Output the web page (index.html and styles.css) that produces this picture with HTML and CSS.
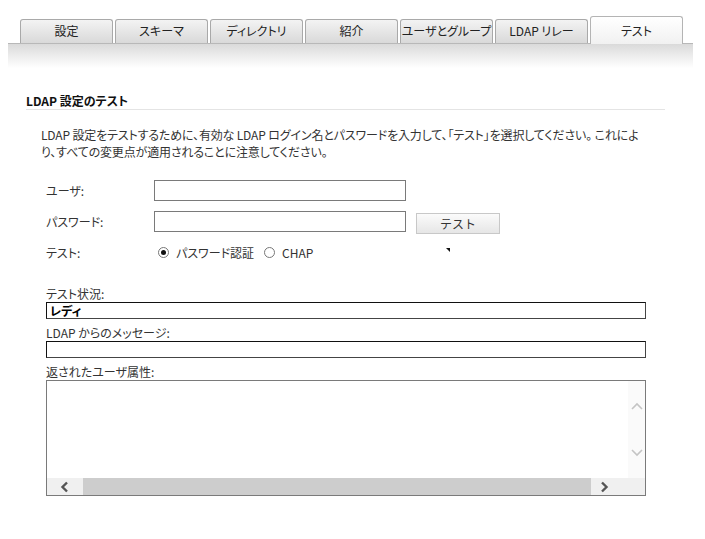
FILE: index.html
```html
<!DOCTYPE html>
<html lang="ja">
<head>
    <meta charset="UTF-8">
    <title>LDAP 設定のテスト</title>
    <link rel="stylesheet" href="styles.css">
</head>
<body>
    <div class="tabs">
        <div class="tab">設定</div>
        <div class="tab">スキーマ</div>
        <div class="tab">ディレクトリ</div>
        <div class="tab">紹介</div>
        <div class="tab">ユーザとグループ</div>
        <div class="tab">LDAP リレー</div>
        <div class="tab active">テスト</div>
    </div>
    <div class="band"></div>

    <div class="content">
        <h2 class="section-title">LDAP 設定のテスト</h2>

        <p class="intro">LDAP 設定をテストするために、有効な LDAP ログイン名とパスワードを入力して、「テスト」を選択してください。 これによ<br>り、すべての変更点が適用されることに注意してください。</p>

        <div class="form">
            <label class="form-label" for="user">ユーザ:</label>
            <div class="form-field"><input type="text" id="user"></div>

            <label class="form-label" for="password">パスワード:</label>
            <div class="form-field">
                <input type="password" id="password">
                <button class="test-btn">テスト</button>
            </div>

            <span class="form-label">テスト:</span>
            <div class="form-field radios">
                <span class="radio checked"></span><span class="radio-text">パスワード認証</span>
                <span class="radio"></span><span class="radio-text">CHAP</span>
                <span class="cursor-mark"></span>
            </div>
        </div>

        <div class="results">
            <div class="result-label">テスト状況:</div>
            <div class="result-box status">レディ</div>

            <div class="result-label">LDAP からのメッセージ:</div>
            <div class="result-box"></div>

            <div class="result-label">返されたユーザ属性:</div>
            <div class="attr-box">
                <div class="attr-main">
                    <div class="attr-text"></div>
                    <div class="vscroll">
                        <svg width="14" height="10" viewBox="0 0 14 10"><path d="M2 8 L7 3 L12 8" fill="none" stroke="#c4c4c4" stroke-width="1.6"/></svg>
                        <svg width="14" height="10" viewBox="0 0 14 10"><path d="M2 2 L7 7 L12 2" fill="none" stroke="#c4c4c4" stroke-width="1.6"/></svg>
                    </div>
                </div>
                <div class="hscroll">
                    <div class="harrow left">
                        <svg width="10" height="12" viewBox="0 0 10 12"><path d="M7 1.5 L2.5 6 L7 10.5" fill="none" stroke="#555" stroke-width="2.4"/></svg>
                    </div>
                    <div class="hthumb"></div>
                    <div class="harrow right">
                        <svg width="10" height="12" viewBox="0 0 10 12"><path d="M3 1.5 L7.5 6 L3 10.5" fill="none" stroke="#555" stroke-width="2.4"/></svg>
                    </div>
                </div>
            </div>
        </div>
    </div>
</body>
</html>
```

FILE: styles.css
```css
body {
    margin: 0;
    background-color: #fff;
    font-family: "Noto Sans CJK JP", sans-serif;
    font-size: 12px;
    font-feature-settings: "palt";
    color: #333;
}

.tabs {
    display: flex;
    align-items: flex-end;
    gap: 2px;
    padding: 15px 0 0 20px;
    box-sizing: border-box;
    height: 43px;
}

.tab {
    width: 93px;
    height: 24px;
    box-sizing: border-box;
    border: 1px solid #a9a9a9;
    border-bottom: none;
    border-radius: 3px 3px 0 0;
    background: linear-gradient(#f3f3f3, #d9d9d9);
    text-align: center;
    line-height: 21px;
    white-space: nowrap;
    color: #222;
}

.tab.active {
    height: 28px;
    line-height: 27px;
    background: linear-gradient(#ffffff, #f1f1f1);
    border-color: #b4b4b4;
    margin-bottom: -1px;
    position: relative;
}

.band {
    margin: 0 12px 0 8px;
    height: 24px;
    border-top: 1px solid #b8b8b8;
    background: linear-gradient(#dadada, #ffffff);
}

.content {
    padding-left: 26px;
    width: 639px;
}

.section-title {
    margin: 27px 0 0 0;
    padding-bottom: 2px;
    font-size: 12px;
    font-weight: bold;
    color: #111;
    line-height: 12px;
    border-bottom: 1px solid #e4e4e4;
}

.intro {
    margin: 16px 0 0 15px;
    line-height: 17px;
    width: 620px;
    white-space: nowrap;
    letter-spacing: -0.15px;
    color: #333;
}

.form {
    display: grid;
    grid-template-columns: 108px 1fr;
    grid-auto-rows: 31px;
    margin: 15px 0 0 20px;
    align-items: center;
}

.form-label {
    color: #333;
}

.form-field {
    display: flex;
    align-items: center;
}

.form-field input {
    width: 252px;
    height: 21px;
    box-sizing: border-box;
    border: 1px solid #7a7a7a;
    margin: 0;
    padding: 0 3px;
}

.test-btn {
    margin-left: 10px;
    margin-top: 4px;
    width: 84px;
    height: 21px;
    border: 1px solid #c8c8c8;
    background: linear-gradient(#fbfbfb, #e6e6e6);
    font-family: inherit;
    font-size: 12px;
    color: #333;
    padding: 0;
}

.radios {
    padding-left: 4px;
    position: relative;
}

.radio {
    width: 11px;
    height: 11px;
    box-sizing: border-box;
    border: 1px solid #777;
    border-radius: 50%;
    background: #fff;
    margin-right: 7px;
    display: flex;
    align-items: center;
    justify-content: center;
}

.radio.checked::after {
    content: "";
    width: 5px;
    height: 5px;
    border-radius: 50%;
    background: #111;
}

.radio-text {
    margin-right: 10px;
}

.cursor-mark {
    position: absolute;
    left: 292px;
    top: 4px;
    width: 0;
    height: 0;
    border-top: 4px solid #111;
    border-left: 4px solid transparent;
}

.results {
    margin: 18px 0 0 20px;
    width: 600px;
}

.result-label {
    line-height: 15px;
    margin-bottom: 1px;
    color: #333;
}

.result-box {
    height: 17px;
    box-sizing: border-box;
    border: 1px solid #444;
    border-top-color: #111;
    border-left-color: #111;
    margin-bottom: 6px;
    padding-left: 3px;
    line-height: 15px;
}

.result-box.status {
    font-weight: bold;
    color: #000;
    font-size: 12px;
}

.attr-box {
    height: 116px;
    box-sizing: border-box;
    border: 1px solid #7a7a7a;
    display: flex;
    flex-direction: column;
}

.attr-main {
    flex: 1;
    display: flex;
}

.attr-text {
    flex: 1;
}

.vscroll {
    width: 17px;
    background: #fafafa;
    display: flex;
    flex-direction: column;
    justify-content: space-between;
    align-items: center;
    padding: 20px 0 20px 0;
}

.hscroll {
    height: 17px;
    display: flex;
    background: #f0f0f0;
}

.harrow {
    width: 36px;
    display: flex;
    align-items: center;
    justify-content: center;
}

.harrow.right {
    width: 54px;
    justify-content: flex-start;
    padding-left: 8px;
    box-sizing: border-box;
}

.hthumb {
    flex: 1;
    background: #cdcdcd;
}
```
